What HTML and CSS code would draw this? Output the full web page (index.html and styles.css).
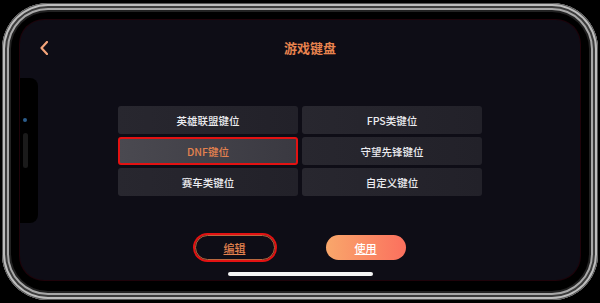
FILE: index.html
```html
<!DOCTYPE html>
<html lang="zh">
<head>
<meta charset="utf-8">
<title>游戏键盘</title>
<link rel="stylesheet" href="styles.css">
</head>
<body>
<div class="phone">
  <div class="screen">
    <div class="notch"><span class="cam"></span><span class="speaker"></span></div>
    <header class="topbar">
      <svg class="back" width="8" height="14" viewBox="0 0 8 14"><polyline points="7,1 1.5,7 7,13" fill="none" stroke="#f4a47a" stroke-width="2.2" stroke-linecap="round" stroke-linejoin="round"/></svg>
      <h1 class="title">游戏键盘</h1>
      <span></span>
    </header>
    <div class="grid">
      <div class="cell">英雄联盟键位</div>
      <div class="cell">FPS类键位</div>
      <div class="cell cell-active">DNF键位</div>
      <div class="cell">守望先锋键位</div>
      <div class="cell">赛车类键位</div>
      <div class="cell">自定义键位</div>
    </div>
    <div class="actions">
      <button class="btn btn-edit">编辑</button>
      <button class="btn btn-use">使用</button>
    </div>
    <div class="home"></div>
  </div>
</div>
</body>
</html>
```
FILE: styles.css
```css
* { box-sizing: border-box; }
html, body { margin: 0; padding: 0; background: #000; }
body { width: 600px; height: 303px; overflow: hidden; font-family: "Noto Sans CJK SC", "Noto Sans", sans-serif; }
.phone {
  margin: 3px 0 0 2px;
  width: 596px;
  height: 297px;
  padding: 17px 18px 20px 18px;
  border-radius: 46px;
  background: #000;
  box-shadow:
    inset 0 0 0 1px #555,
    inset 0 0 0 3px #bdbdbd,
    inset 0 0 0 5px #3c3c3c,
    inset 0 0 0 7px #a8a8a8,
    inset 0 0 0 9px #222;
}
.screen {
  position: relative;
  height: 260px;
  border-radius: 24px;
  background: #0e0d16;
  box-shadow: 0 0 0 1px rgba(90, 10, 30, 0.35);
  display: flex;
  flex-direction: column;
  overflow: hidden;
}
.notch {
  position: absolute;
  left: 0;
  top: 58px;
  width: 18px;
  height: 145px;
  background: #000;
  border-radius: 0 8px 8px 0;
}
.cam {
  position: absolute;
  left: 3px;
  top: 40px;
  width: 4px;
  height: 4px;
  border-radius: 50%;
  background: #2b5d8c;
}
.speaker {
  position: absolute;
  left: 3px;
  top: 55px;
  width: 5px;
  height: 35px;
  border-radius: 3px;
  background: #1a1a1a;
}
.topbar {
  margin-top: 21px;
  height: 12px;
  padding-left: 20px;
  display: grid;
  grid-template-columns: 1fr auto 1fr;
  align-items: center;
}
.back { display: block; }
.title {
  margin: 0;
  font-size: 13px;
  line-height: 12px;
  font-weight: 700;
  color: #e8834e;
}
.grid {
  margin-top: 53px;
  display: grid;
  grid-template-columns: 180px 180px;
  grid-auto-rows: 28px;
  gap: 3px 4px;
  justify-content: center;
}
.cell {
  border-radius: 3px;
  background: linear-gradient(90deg, #28272f, #222129);
  color: #ececf0;
  font-size: 10.5px;
  font-weight: 500;
  display: flex;
  align-items: center;
  justify-content: center;
}
.cell-active {
  border: 2px solid #e31212;
  background: linear-gradient(90deg, #4a4950, #3a3941);
  color: #e4824f;
}
.actions {
  margin-top: 39px;
  display: flex;
  justify-content: center;
  gap: 51px;
}
.btn {
  width: 80px;
  height: 25px;
  border-radius: 13px;
  font-family: inherit;
  font-size: 11px;
  font-weight: 500;
  text-decoration: underline;
  padding: 0;
  cursor: pointer;
}
.btn-edit {
  background: transparent;
  border: 1px solid #b8683f;
  color: #e4824f;
  box-shadow: 0 0 0 2px #e31212;
}
.btn-use {
  border: 0;
  background: linear-gradient(90deg, #f9a76b, #fb705e);
  color: #fff;
}
.home {
  margin: 12px auto 0;
  width: 145px;
  height: 4px;
  border-radius: 2px;
  background: #f4f4f4;
}
```
